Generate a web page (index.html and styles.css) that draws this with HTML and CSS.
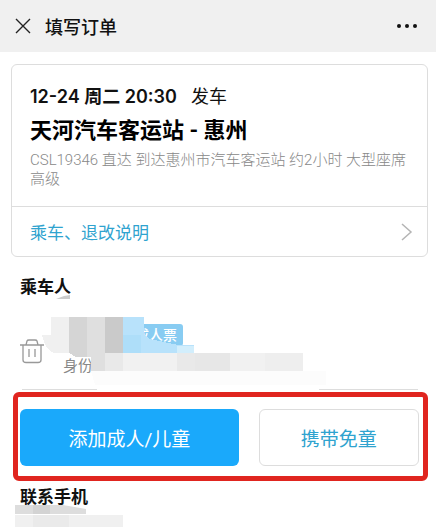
FILE: index.html
```html
<!DOCTYPE html>
<html lang="zh-CN">
<head>
  <meta charset="UTF-8" />
  <meta name="viewport" content="width=device-width, initial-scale=1.0" />
  <title>填写订单</title>
  <link rel="stylesheet" href="styles.css">
</head>
<body>
  <header class="header">
    <button class="icon-btn" aria-label="关闭">
      <svg width="16" height="16" viewBox="0 0 16 16"><path d="M1 1L15 15M15 1L1 15" stroke="#222" stroke-width="1.4" /></svg>
    </button>
    <h1>填写订单</h1>
    <button class="icon-btn" aria-label="更多">
      <svg width="20" height="6" viewBox="0 0 20 6" fill="#111"><circle cx="2" cy="3" r="2" /><circle cx="10" cy="3" r="2" /><circle cx="18" cy="3" r="2" /></svg>
    </button>
  </header>

  <section class="card">
    <div class="trip">
      <p class="trip-time"><strong>12-24 周二 20:30</strong><span>发车</span></p>
      <h2>天河汽车客运站 - 惠州</h2>
      <p class="trip-info">CSL19346 直达 到达惠州市汽车客运站 约2小时 大型座席 高级</p>
    </div>
    <a class="notice" href="#">
      <span>乘车、退改说明</span>
      <svg width="12" height="20" viewBox="0 0 12 20" fill="none"><path d="M1 2L10 10L1 18" stroke="#b4b4b4" stroke-width="1.5" /></svg>
    </a>
  </section>

  <h3 class="section-title">乘车人</h3>
  <div class="passenger">
    <button class="icon-btn" aria-label="删除">
      <svg width="24" height="25" viewBox="0 0 24 25" fill="none" stroke="#999" stroke-width="1.3">
        <path d="M0 6H24M6 6L7 2Q7.300 1 9 1H15Q16.700 1 17 2L18 6M3 6V21Q3 23.500 6 23.500H18Q21 23.500 21 21V6M9 10V18M15 10V18" />
      </svg>
    </button>
    <div class="passenger-info">
      <span class="tag">成人票</span>
      <span class="id-label">身份</span>
    </div>
    <!-- hides the name and the ID number -->
    <svg class="mosaic" width="284" height="86" viewBox="42 299 284 86" shape-rendering="crispEdges">
      <path d="M51 317H69V353H54Q46 351 42 335H51Z" fill="#f0f0f0" />
      <path d="M69 317H87V357H76L69 353Z" fill="#d5d5d5" />
      <path d="M87 317H105V371H91V357H87Z" fill="#dfdfdf" />
      <path d="M105 317H123V353H105Z" fill="#cacaca" />
      <path d="M123 317H144V335L150 339L164 342L178 345H194V353H123Z" fill="#b8e2fb" />
      <path d="M123 335H141V353H123Z" fill="#aedef9" />
      <path d="M177 346H194V353H177Z" fill="#d2eefc" />
      <path d="M105 353H303V371H105Z" fill="#f1f1f1" />
      <path d="M105 353H123V371H105ZM177 353H195V371H177Z" fill="#e9e9e9" />
      <path d="M195 353H230V371H195Z" fill="#e7e7e7" />
      <path d="M265 353H303V371H265Z" fill="#eee" />
      <path d="M91 371H326V385H95Z" fill="#fcfcfc" />
    </svg>
    <svg class="mark" width="14" height="4" viewBox="0 0 14 4"><path d="M0 4L8 1L14 0V4Z" fill="#ccc" /></svg>
  </div>
  <div class="row-line"><i></i><i></i></div>

  <div class="actions">
    <button class="btn btn-primary">添加成人/儿童</button>
    <button class="btn btn-plain">携带免童</button>
  </div>

  <div class="phone">
    <h3 class="section-title">联系手机</h3>
    <svg class="phone-mosaic" width="108" height="22" viewBox="0 0 108 22">
      <path d="M0 0H48L71 4V9H0Z" fill="#ddd" />
      <path d="M18 0H35V9H18Z" fill="#d3d3d3" />
      <path d="M0 10H108V22H0Z" fill="#f0f0f0" />
      <path d="M18 10H54V22H18Z" fill="#eaeaea" />
    </svg>
  </div>
</body>
</html>
```
FILE: styles.css
```css
* { box-sizing: border-box; }
body {
  font-family: Roboto, "Noto Sans CJK SC", sans-serif;
  background: #fff;
  color: #111;
  margin: 0;
}
h1, h2, h3, p { margin: 0; }
button { font-family: inherit; cursor: pointer; }
svg { display: block; }
.header {
  display: flex;
  align-items: center;
  height: 52px;
  padding: 0 19px 0 15px;
  background: #f0f0f0;
}
.header h1 {
  flex: 1;
  margin-left: 14px;
  font-size: 18px;
  font-weight: 500;
}
.icon-btn {
  padding: 0;
  border: none;
  background: none;
}
.card {
  margin: 12px 8px 0 11px;
  border: 1px solid #ddd;
  border-radius: 6px;
}
.trip {
  padding: 18px 18px 17px;
  border-bottom: 1px solid #ddd;
}
.trip-time {
  font-family: Inter, "Noto Sans CJK SC", sans-serif;
  font-size: 18px;
  line-height: 28px;
}
.trip-time strong { font-weight: 600; }
.trip-time span { margin-left: 14px; }
.trip h2 {
  font-size: 22px;
  font-weight: 700;
  line-height: 40px;
  color: #000;
}
.trip-info {
  font-size: 15px;
  font-weight: 300;
  line-height: 19px;
  color: #888;
}
.notice {
  display: flex;
  align-items: center;
  justify-content: space-between;
  height: 49px;
  padding: 0 14px 0 18px;
  font-size: 17px;
  color: #2fa3cf;
  text-decoration: none;
}
.section-title {
  font-size: 17px;
  font-weight: 700;
  line-height: 24px;
}
body > .section-title { margin: 18px 0 0 20px; }
.passenger {
  position: relative;
  display: flex;
  align-items: center;
  height: 90px;
  padding: 14px 20px 0;
}
.passenger-info {
  display: flex;
  flex-direction: column;
  margin-left: 19px;
}
.tag {
  align-self: flex-end;
  margin-left: 66px;
  padding: 0 6px;
  border-radius: 3px;
  background: #88ccf2;
  color: #fff;
  font-size: 14px;
  font-weight: 500;
  line-height: 22px;
}
.id-label {
  margin-top: 8px;
  font-size: 15px;
  line-height: 24px;
  color: #888;
}
.mosaic {
  position: absolute;
  left: 42px;
  top: 0;
}
.mark {
  position: absolute;
  left: 56px;
  top: -4px;
}
.row-line {
  display: flex;
  justify-content: space-between;
  margin: 0 18px 0 22px;
}
.row-line i {
  width: 25%;
  height: 1px;
  background: #ddd;
}
.row-line i:first-child { width: 19%; }
.actions {
  display: flex;
  gap: 20px;
  margin: 2px 8px 0 13px;
  padding: 12px 4px 10px 2px;
  border: 5px solid #e0251f;
  border-radius: 6px;
}
.btn {
  height: 57px;
  padding: 0;
  border-radius: 6px;
  font-size: 19px;
}
.btn-primary {
  flex: 58;
  border: none;
  background: #1aa9fb;
  color: #fff;
}
.btn-plain {
  flex: 42;
  border: 1px solid #ddd;
  background: #fff;
  color: #2fa3cf;
}
.phone {
  position: relative;
  padding: 4px 20px 18px;
}
.phone-mosaic {
  position: absolute;
  left: 15px;
  bottom: 0;
  z-index: -1;
}
```
